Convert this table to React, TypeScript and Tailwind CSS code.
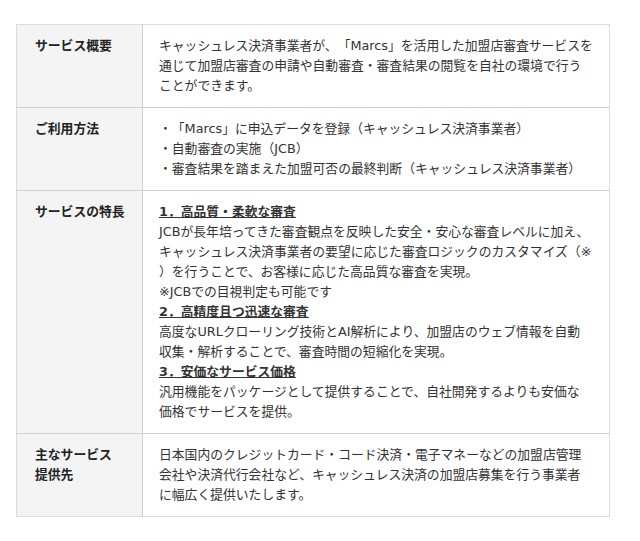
// each string is one rendered line, so the wrapping matches the page
const Lines = ({ lines }: { lines: string[] }) => (
  <p>
    {lines.map((l, i) => (
      <span key={i} className="block">
        {l}
      </span>
    ))}
  </p>
)

const rows: { head: React.ReactNode; body: React.ReactNode }[] = [
  {
    head: 'サービス概要',
    body: (
      <Lines
        lines={[
          'キャッシュレス決済事業者が、「Marcs」を活用した加盟店審査サービスを',
          '通じて加盟店審査の申請や自動審査・審査結果の閲覧を自社の環境で行う',
          'ことができます。',
        ]}
      />
    ),
  },
  {
    head: 'ご利用方法',
    body: (
      <ul>
        <li>・「Marcs」に申込データを登録（キャッシュレス決済事業者）</li>
        <li>・自動審査の実施（JCB）</li>
        <li>・審査結果を踏まえた加盟可否の最終判断（キャッシュレス決済事業者）</li>
      </ul>
    ),
  },
  {
    head: 'サービスの特長',
    body: (
      <div>
        <p className="font-bold underline">1．高品質・柔軟な審査</p>
        <Lines
          lines={[
            'JCBが長年培ってきた審査観点を反映した安全・安心な審査レベルに加え、',
            'キャッシュレス決済事業者の要望に応じた審査ロジックのカスタマイズ（※',
            '）を行うことで、お客様に応じた高品質な審査を実現。',
          ]}
        />
        <p>※JCBでの目視判定も可能です</p>
        <p className="font-bold underline">2．高精度且つ迅速な審査</p>
        <Lines
          lines={[
            '高度なURLクローリング技術とAI解析により、加盟店のウェブ情報を自動',
            '収集・解析することで、審査時間の短縮化を実現。',
          ]}
        />
        <p className="font-bold underline">3．安価なサービス価格</p>
        <Lines
          lines={[
            '汎用機能をパッケージとして提供することで、自社開発するよりも安価な',
            '価格でサービスを提供。',
          ]}
        />
      </div>
    ),
  },
  {
    head: (
      <>
        主なサービス
        <br />
        提供先
      </>
    ),
    body: (
      <Lines
        lines={[
          '日本国内のクレジットカード・コード決済・電子マネーなどの加盟店管理',
          '会社や決済代行会社など、キャッシュレス決済の加盟店募集を行う事業者',
          'に幅広く提供いたします。',
        ]}
      />
    ),
  },
]

export default function App() {
  return (
    <div
      className="min-h-[541px] bg-white pt-6 pl-4 text-[12.8px] leading-5 text-[#333] [text-spacing-trim:space-all]"
      style={{ fontFamily: '"DejaVu Sans", "Noto Sans CJK JP", sans-serif' }}
    >
      <table className="w-[594px] table-fixed border border-[#dcdcdc]">
        <tbody>
          {rows.map((row, i) => (
            <tr key={i} className="border-t border-[#d0d0d0] first:border-t-[#dcdcdc]">
              <th className="w-[126px] border-r border-[#d0d0d0] bg-[#f4f4f4] py-[11px] pl-[18px] pr-[8px] text-left align-top font-bold text-[#222]">
                {row.head}
              </th>
              <td className="whitespace-nowrap py-[11px] pl-[16px] pr-[12px] align-top">{row.body}</td>
            </tr>
          ))}
        </tbody>
      </table>
    </div>
  )
}
